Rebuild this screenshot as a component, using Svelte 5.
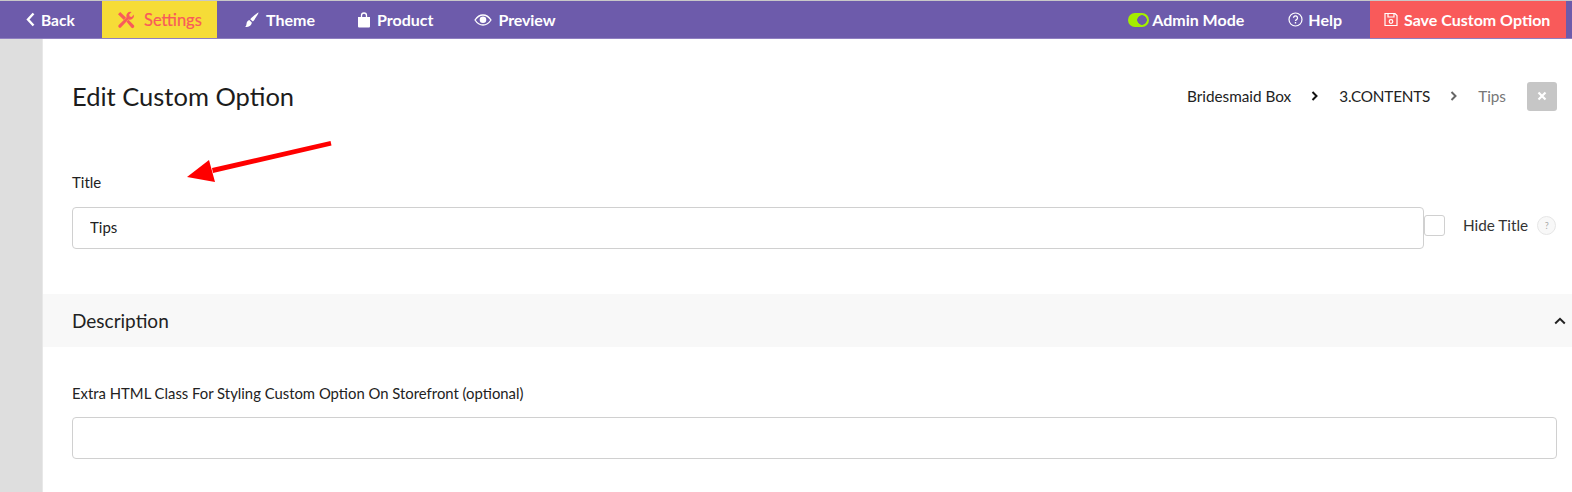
<script>
	const crumbs = [
		{ label: 'Bridesmaid Box' },
		{ label: '3.CONTENTS' }
	];
</script>

<div class="page">
	<header class="topbar">
		<nav class="left">
			<a class="back">
				<svg width="9" height="15" viewBox="0 0 9 15"><path d="M7.500 1.500 2 7.500l5.500 6" fill="none" stroke="#fff" stroke-width="2.400"/></svg>
				Back
			</a>
			<a class="tab active">
				<svg width="18" height="18" viewBox="0 0 18 18" fill="#f95a5a">
					<path d="M1 3.200 3.200 1l5.800 5.600-2.200 2.300zM9.500 10.800l2-2 5.400 5.500a1.500 1.500 0 0 1 0 2l-.4.400a1.500 1.500 0 0 1-2 0z"/>
					<path d="M16.800 3.400a4.200 4.200 0 0 1-5.400 5.100l-7.300 7.800a1.600 1.600 0 0 1-2.400-2.300l7.800-7.400A4.200 4.200 0 0 1 14.600 1l-2.400 2.400.5 2 2 .5z"/>
				</svg>
				Settings
			</a>
			<a class="tab theme">
				<svg width="15" height="16" viewBox="0 0 15 16" fill="#fff"><path d="M14.500.500c.5.400-3.800 7.400-5.700 9L6.200 7.200C8 5.100 14 .1 14.500.5zM5.300 8.100l2.500 2.300c-.2 2.400-2 4.600-6.800 4.600 1.500-1 1.300-2.300 1.600-3.800.3-1.500 1.300-2.700 2.700-3.100z"/></svg>
				Theme
			</a>
			<a class="tab product">
				<svg width="14" height="16" viewBox="0 0 14 16"><path d="M1 5h12v9.500a1 1 0 0 1-1 1H2a1 1 0 0 1-1-1z" fill="#fff"/><path d="M4.500 7V3.500a2.500 2.500 0 0 1 5 0V7" fill="none" stroke="#fff" stroke-width="1.300"/></svg>
				Product
			</a>
			<a class="tab preview">
				<svg width="18" height="12" viewBox="0 0 18 12"><path d="M1 6c2-3 4.800-5 8-5s6 2 8 5c-2 3-4.800 5-8 5S3 9 1 6z" fill="none" stroke="#fff" stroke-width="1.300"/><circle cx="9" cy="5.800" r="3.300" fill="#fff"/></svg>
				Preview
			</a>
		</nav>
		<div class="right">
			<a class="admin"><span class="toggle"></span>Admin Mode</a>
			<a class="help">
				<svg width="15" height="15" viewBox="0 0 15 15"><circle cx="7.500" cy="7.500" r="6.500" fill="none" stroke="#fff" stroke-width="1.200"/><path d="M5.500 5.800a2 2 0 1 1 3 1.800c-.7.400-1 .8-1 1.500" fill="none" stroke="#fff" stroke-width="1.300"/><rect x="6.800" y="10" width="1.400" height="1.500" fill="#fff"/></svg>
				Help
			</a>
			<button class="save">
				<svg width="14" height="15" viewBox="0 0 14 15" fill="none" stroke="#fff" stroke-width="1.200"><path d="M1 1.500h10l2 2v10H1z"/><path d="M4 1.500v3.500h6V1.500"/><circle cx="7" cy="9.500" r="1.800"/></svg>
				Save Custom Option
			</button>
		</div>
	</header>

	<div class="body">
		<aside class="rail"></aside>
		<main>
			<div class="head">
				<h1>Edit Custom Option</h1>
				<div class="crumbs">
					{#each crumbs as c, i}
						<span class="crumb" class:caps={i === 1}>{c.label}</span>
						<svg class="sep" class:dim={i === 1} width="7" height="10" viewBox="0 0 7 10"><path d="M1.500 1 5.500 5l-4 4" fill="none" stroke="currentColor" stroke-width="2"/></svg>
					{/each}
					<span class="crumb current">Tips</span>
					<button class="close" aria-label="Close">
						<svg width="10" height="10" viewBox="0 0 10 10"><path d="M1.500 1.500l7 7m0-7-7 7" stroke="#fff" stroke-width="2.200"/></svg>
					</button>
				</div>
			</div>

			<svg class="arrow" width="146" height="48" viewBox="0 0 146 48"><path d="M143.500 1 25 28l1 5L144.500 5.500z" fill="#ff0000"/><path d="M0 37 22 20l6 22z" fill="#ff0000"/></svg>

			<section class="title-field">
				<label for="title">Title</label>
				<div class="title-row">
					<input id="title" value="Tips" />
					<span class="check"></span>
					<span class="hide">Hide Title</span>
					<span class="hint">?</span>
				</div>
			</section>

			<div class="band">
				<h2>Description</h2>
				<svg width="12" height="8" viewBox="0 0 12 8"><path d="M1.200 6.500 6 1.800l4.800 4.700" fill="none" stroke="#222" stroke-width="2"/></svg>
			</div>

			<section class="extra">
				<label for="extra">Extra HTML Class For Styling Custom Option On Storefront (optional)</label>
				<input id="extra" />
			</section>
		</main>
	</div>
</div>

<style>
	:global(body) { margin: 0; background: #fff; }

	.page {
		width: 1572px;
		height: 492px;
		overflow: hidden;
		display: flex;
		flex-direction: column;
		font-family: Lato, "Liberation Sans", sans-serif;
		color: #222;
	}

	.topbar {
		height: 37px;
		margin-top: 1px;
		box-shadow: 0 -1px 0 #c8c8c8;
		border-bottom: 1px solid #8f7fc0;
		background: #6d5bab;
		display: flex;
		justify-content: space-between;
		flex-shrink: 0;
		color: #fff;
		font-size: 16px;
		font-weight: 700;
	}

	.left, .right { display: flex; align-items: stretch; }
	.left a, .right a { display: flex; align-items: center; }

	.back { gap: 6px; padding-left: 26px; width: 76px; font-size: 15.500px; }
	.tab { gap: 6px; }
	.tab.theme { padding-left: 27px; gap: 7px; }
	.tab.product { padding-left: 42px; }
	.tab.preview { padding-left: 41px; letter-spacing: -0.1px; }
	.tab.active {
		box-sizing: border-box;
		width: 115px;
		padding-left: 15px;
		gap: 9px;
		background: #f6dc37;
		color: #f95a5a;
		font-size: 16.500px;
		font-weight: 400;
		-webkit-text-stroke: 0.2px #f95a5a;
	}

	.admin { gap: 3px; margin-right: 44px; }
	.toggle {
		width: 21px;
		height: 14px;
		border-radius: 7px;
		background: radial-gradient(circle at 14px 7px, #6d5bab 4.500px, #a4ee00 5px);
	}
	.help { gap: 5px; margin-right: 28px; }

	.save {
		display: flex;
		align-items: center;
		gap: 6px;
		width: 196px;
		margin-right: 6px;
		padding: 0 0 0 14px;
		border: 0;
		background: #f95a5a;
		color: #fff;
		font: inherit;
		white-space: nowrap;
	}

	.body { flex: 1; display: flex; min-height: 0; }
	.rail { width: 42px; background: #dedede; border-right: 1px solid #e8e8e8; flex-shrink: 0; }
	main { flex: 1; min-width: 0; position: relative; }

	.head {
		display: flex;
		justify-content: space-between;
		align-items: center;
		height: 30px;
		margin-top: 42px;
		padding: 0 15px 0 29px;
	}
	h1 { margin: 0; font-size: 25.500px; font-weight: 400; color: #1c1c1c; }

	.crumbs { display: flex; align-items: center; font-size: 15.300px; }
	.crumb { color: #222; }
	.crumb.caps { letter-spacing: -0.2px; }
	.crumb.current { color: #777; margin-right: 21px; }
	.sep { margin: 0 21px 0 20px; color: #111; }
	.sep.dim { color: #666; }
	.close {
		width: 30px;
		height: 29px;
		padding: 0;
		border: 0;
		border-radius: 3px;
		background: #c6c6c6;
		display: flex;
		align-items: center;
		justify-content: center;
	}

	.arrow { position: absolute; left: 144px; top: 101px; }

	label { display: block; font-size: 15px; color: #222; }

	input {
		box-sizing: border-box;
		height: 42px;
		padding: 0 17px 2px;
		border: 1px solid #d0d0d0;
		border-radius: 4px;
		background: #fff;
		font: 15px Lato, "Liberation Sans", sans-serif;
		color: #222;
		outline: none;
	}

	.title-field { margin-top: 62px; padding-left: 29px; }
	.title-row { display: flex; align-items: center; margin-top: 16px; }
	.title-row input { width: 1352px; }
	.check {
		width: 19px;
		height: 19px;
		border: 1px solid #d0d0d0;
		border-radius: 3px;
		margin-top: -6px;
	}
	.hide { margin-left: 18px; margin-top: -6px; font-size: 15.300px; color: #333; }
	.hint {
		width: 19px;
		height: 19px;
		box-sizing: border-box;
		margin: -6px 0 0 9px;
		border: 1px solid #e6e6e6;
		border-radius: 50%;
		background: #f8f8f8;
		color: #aaa;
		font-size: 9px;
		line-height: 18px;
		text-align: center;
	}

	.band {
		display: flex;
		justify-content: space-between;
		align-items: center;
		height: 53px;
		margin-top: 45px;
		padding: 0 6px 0 29px;
		background: #f8f8f8;
	}
	h2 { margin: 0; font-size: 19px; font-weight: 400; color: #222; }

	.extra { margin-top: 37px; padding: 0 15px 0 29px; }
	.extra label { font-size: 14.850px; }
	.extra input { display: block; width: 100%; margin-top: 15px; }
</style>
